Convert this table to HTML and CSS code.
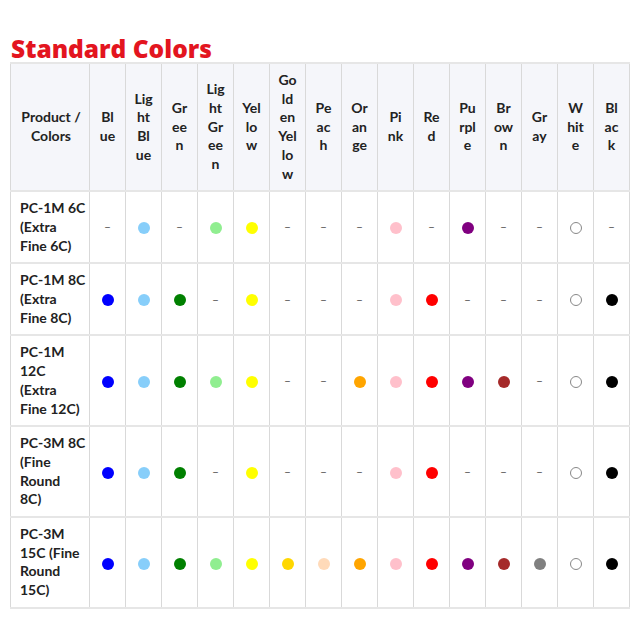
FILE: index.html
```html
<!DOCTYPE html>
<html>
<head>
<meta charset="utf-8">
<link rel="stylesheet" href="styles.css">
</head>
<body>
<h2 class="title">Standard Colors</h2>
<table class="colors">
<colgroup>
<col class="c-prod">
<col class="c-col"><col class="c-col"><col class="c-col"><col class="c-col"><col class="c-col"><col class="c-col"><col class="c-col"><col class="c-col"><col class="c-col"><col class="c-col"><col class="c-col"><col class="c-col"><col class="c-col"><col class="c-col"><col class="c-col">
</colgroup>
<thead>
<tr>
<th class="prod">Product / Colors</th>
<th>Bl<br>ue</th>
<th>Lig<br>ht<br>Bl<br>ue</th>
<th>Gr<br>ee<br>n</th>
<th>Lig<br>ht<br>Gr<br>ee<br>n</th>
<th>Yel<br>lo<br>w</th>
<th>Go<br>ld<br>en<br>Yel<br>lo<br>w</th>
<th>Pe<br>ac<br>h</th>
<th>Or<br>an<br>ge</th>
<th>Pi<br>nk</th>
<th>Re<br>d</th>
<th>Pu<br>rpl<br>e</th>
<th>Br<br>ow<br>n</th>
<th>Gr<br>ay</th>
<th>W<br>hit<br>e</th>
<th>Bl<br>ac<br>k</th>
</tr>
</thead>
<tbody>
<tr>
<td class="prod"><span class="nw">PC-1M 6C</span> (Extra Fine 6C)</td>
<td><span class="na">–</span></td><td><span class="dot lightblue"></span></td><td><span class="na">–</span></td><td><span class="dot lightgreen"></span></td><td><span class="dot yellow"></span></td><td><span class="na">–</span></td><td><span class="na">–</span></td><td><span class="na">–</span></td><td><span class="dot pink"></span></td><td><span class="na">–</span></td><td><span class="dot purple"></span></td><td><span class="na">–</span></td><td><span class="na">–</span></td><td><span class="dot white"></span></td><td><span class="na">–</span></td>
</tr>
<tr>
<td class="prod"><span class="nw">PC-1M 8C</span> (Extra Fine 8C)</td>
<td><span class="dot blue"></span></td><td><span class="dot lightblue"></span></td><td><span class="dot green"></span></td><td><span class="na">–</span></td><td><span class="dot yellow"></span></td><td><span class="na">–</span></td><td><span class="na">–</span></td><td><span class="na">–</span></td><td><span class="dot pink"></span></td><td><span class="dot red"></span></td><td><span class="na">–</span></td><td><span class="na">–</span></td><td><span class="na">–</span></td><td><span class="dot white"></span></td><td><span class="dot black"></span></td>
</tr>
<tr>
<td class="prod">PC-1M 12C (Extra Fine 12C)</td>
<td><span class="dot blue"></span></td><td><span class="dot lightblue"></span></td><td><span class="dot green"></span></td><td><span class="dot lightgreen"></span></td><td><span class="dot yellow"></span></td><td><span class="na">–</span></td><td><span class="na">–</span></td><td><span class="dot orange"></span></td><td><span class="dot pink"></span></td><td><span class="dot red"></span></td><td><span class="dot purple"></span></td><td><span class="dot brown"></span></td><td><span class="na">–</span></td><td><span class="dot white"></span></td><td><span class="dot black"></span></td>
</tr>
<tr>
<td class="prod"><span class="nw">PC-3M 8C</span> (Fine Round 8C)</td>
<td><span class="dot blue"></span></td><td><span class="dot lightblue"></span></td><td><span class="dot green"></span></td><td><span class="na">–</span></td><td><span class="dot yellow"></span></td><td><span class="na">–</span></td><td><span class="na">–</span></td><td><span class="na">–</span></td><td><span class="dot pink"></span></td><td><span class="dot red"></span></td><td><span class="na">–</span></td><td><span class="na">–</span></td><td><span class="na">–</span></td><td><span class="dot white"></span></td><td><span class="dot black"></span></td>
</tr>
<tr>
<td class="prod">PC-3M 15C (Fine Round 15C)</td>
<td><span class="dot blue"></span></td><td><span class="dot lightblue"></span></td><td><span class="dot green"></span></td><td><span class="dot lightgreen"></span></td><td><span class="dot yellow"></span></td><td><span class="dot gold"></span></td><td><span class="dot peach"></span></td><td><span class="dot orange"></span></td><td><span class="dot pink"></span></td><td><span class="dot red"></span></td><td><span class="dot purple"></span></td><td><span class="dot brown"></span></td><td><span class="dot gray"></span></td><td><span class="dot white"></span></td><td><span class="dot black"></span></td>
</tr>
</tbody>
</table>
</body>
</html>
```
FILE: styles.css
```css
body {
  margin: 0;
  padding: 36px 10px 10px 10px;
  background: #fff;
  font-family: Lato, "Noto Sans", sans-serif;
  color: #222;
}
.title {
  margin: 0 0 0 1px;
  font-family: "Open Sans", sans-serif;
  font-weight: 800;
  font-size: 24.5px;
  line-height: 26px;
  color: #e3151f;
}
.colors {
  border-collapse: collapse;
  table-layout: fixed;
  width: 620px;
  font-size: 14px;
  font-weight: 700;
  line-height: 18.7px;
}
.c-prod { width: 79px; }
.c-col { width: 36px; }
.colors th,
.colors td {
  border-left: 1px solid #d9d9d9;
  border-right: 1px solid #d9d9d9;
  border-top: 2px solid #e6e6e6;
  border-bottom: 2px solid #e6e6e6;
  padding: 7px 2px;
  text-align: center;
  vertical-align: middle;
  white-space: nowrap;
}
.colors th {
  background: #f5f6fa;
}
.colors .prod {
  padding: 7px 7px 7px 9px;
  text-align: left;
  white-space: normal;
}
.colors th.prod {
  text-align: center;
}
.nw {
  white-space: nowrap;
}
.na {
  color: #555;
  font-weight: 400;
  font-size: 12px;
}
.dot {
  display: inline-block;
  width: 12px;
  height: 12px;
  border-radius: 50%;
  vertical-align: middle;
  box-sizing: border-box;
}
.blue { background: #0000ff; }
.lightblue { background: #87cefa; }
.green { background: #008000; }
.lightgreen { background: #90ee90; }
.yellow { background: #ffff00; }
.gold { background: #ffd700; }
.peach { background: #ffdab9; }
.orange { background: #ffa500; }
.pink { background: #ffc0cb; }
.red { background: #ff0000; }
.purple { background: #800080; }
.brown { background: #a52a2a; }
.gray { background: #808080; }
.black { background: #000; }
.white { background: #fff; border: 1px solid #888; }
```
